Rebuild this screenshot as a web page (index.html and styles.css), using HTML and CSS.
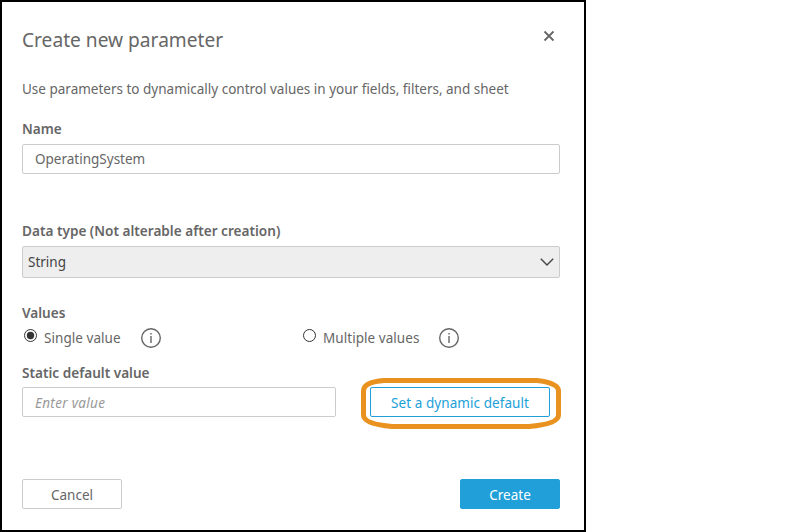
FILE: index.html
```html
<!DOCTYPE html>
<html lang="en">
<head>
<meta charset="utf-8">
<title>Create new parameter</title>
<link rel="stylesheet" href="styles.css">
</head>
<body>
<main class="dialog">
  <header class="header">
    <h1 class="title">Create new parameter</h1>
    <svg class="close" width="12" height="12" viewBox="0 0 12 12"><path d="M1.500 1.500 10.500 10.500M10.500 1.500 1.500 10.500"/></svg>
  </header>
  <p class="description">Use parameters to dynamically control values in your fields, filters, and sheet</p>
  <section class="name-field">
    <h2 class="label">Name</h2>
    <div class="input">OperatingSystem</div>
  </section>
  <section class="type-field">
    <h2 class="label">Data type (Not alterable after creation)</h2>
    <div class="select"><span>String</span>
      <svg class="chevron" width="14" height="8" viewBox="0 0 14 8"><path d="M.8.8 7 7 13.2.8"/></svg>
    </div>
  </section>
  <section class="values-field">
    <h2 class="label">Values</h2>
    <div class="options">
      <div class="option">
        <svg class="radio" width="14" height="14" viewBox="0 0 14 14"><circle class="ring" cx="7.500" cy="6.500" r="6"/><circle class="dot" cx="7.500" cy="6.500" r="3.700"/></svg>
        <span class="option-text">Single value</span>
        <svg class="info" width="20" height="20" viewBox="0 0 20 20"><circle cx="10" cy="10" r="9.300"/><path d="M10 8v7M10 5v1.600"/></svg>
      </div>
      <div class="option">
        <svg class="radio" width="14" height="14" viewBox="0 0 14 14"><circle class="ring" cx="7.500" cy="6.500" r="6"/></svg>
        <span class="option-text">Multiple values</span>
        <svg class="info" width="20" height="20" viewBox="0 0 20 20"><circle cx="10" cy="10" r="9.300"/><path d="M10 8v7M10 5v1.600"/></svg>
      </div>
    </div>
  </section>
  <section class="default-field">
    <h2 class="label">Static default value</h2>
    <div class="default-row">
      <div class="input placeholder">Enter value</div>
      <div class="button dynamic">Set a dynamic default
        <svg class="highlight" width="200" height="54" viewBox="0 0 200 54"><path d="M23 4.500H176Q197.500 7 197.500 15V39Q197.500 48 168 50.500H31Q2.500 48 2.500 39V15Q2.500 6 23 4.500Z"/></svg>
      </div>
    </div>
  </section>
  <footer class="footer">
    <div class="button">Cancel</div>
    <div class="button primary">Create</div>
  </footer>
</main>
</body>
</html>
```
FILE: styles.css
```css
* { box-sizing: border-box; }
body { margin: 0; background: #fff; color: #666; font: 13.5px/18px "Noto Sans", sans-serif; }
h1, h2, p { margin: 0; }
svg { display: block; fill: none; flex: none; }
.dialog { width: 586px; height: 532px; border: 2px solid #000; padding: 22px 24px 0 20px; white-space: nowrap; }
.header { display: flex; justify-content: space-between; height: 32px; }
.title { font-size: 19.15px; font-weight: 400; line-height: 32px; }
.close { margin: 6px 5px 0 0; stroke: #666; stroke-width: 1.8; }
.description { margin-top: 24px; }
.label { font-size: 13.6px; font-weight: 600; line-height: 18px; }
.name-field { margin-top: 22px; }
.input { height: 30px; margin-top: 6px; padding: 0 12px; border: 1px solid #ccc; border-radius: 2px; line-height: 28px; }
.type-field { margin-top: 48px; }
.select { display: flex; align-items: center; justify-content: space-between; height: 32px; margin-top: 6px; padding: 0 5px; border: 1px solid #ccc; border-radius: 2px; background: #eee; color: #444; }
.chevron { stroke: #444; stroke-width: 1.4; }
.values-field { margin-top: 26px; }
.options { display: grid; grid-template-columns: 279px 1fr; margin-top: 6px; }
.option { display: flex; align-items: center; height: 20px; padding-left: 1px; }
.option-text { letter-spacing: .05px; }
.option:first-child .option-text { width: 77px; }
.option:last-child .option-text { width: 96px; }
.radio { margin: 0 7px 4px 0; }
.ring { stroke: #333; stroke-width: 1; }
.dot { fill: #333; }
.info { margin-left: 20px; stroke: #666; stroke-width: 1.4; }
.default-field { margin-top: 16px; }
.default-row { display: flex; justify-content: space-between; margin-top: 5px; padding-right: 10px; }
.default-row .input { width: 314px; margin: 0; }
.input.placeholder { padding-top: 1px; color: #999; font-style: italic; letter-spacing: .3px; }
.button { display: flex; align-items: center; justify-content: center; width: 100px; height: 30px; padding-top: 2px; border: 1px solid #ccc; border-radius: 2px; }
.dynamic { position: relative; width: 180px; border-color: #219fd9; color: #219fd9; letter-spacing: .07px; }
.highlight { position: absolute; left: -10px; top: -12px; stroke: #e9921f; stroke-width: 5; }
.footer { display: flex; justify-content: space-between; margin-top: 62px; }
.primary { border-color: #219fd9; background: #219fd9; color: #fff; }
```
